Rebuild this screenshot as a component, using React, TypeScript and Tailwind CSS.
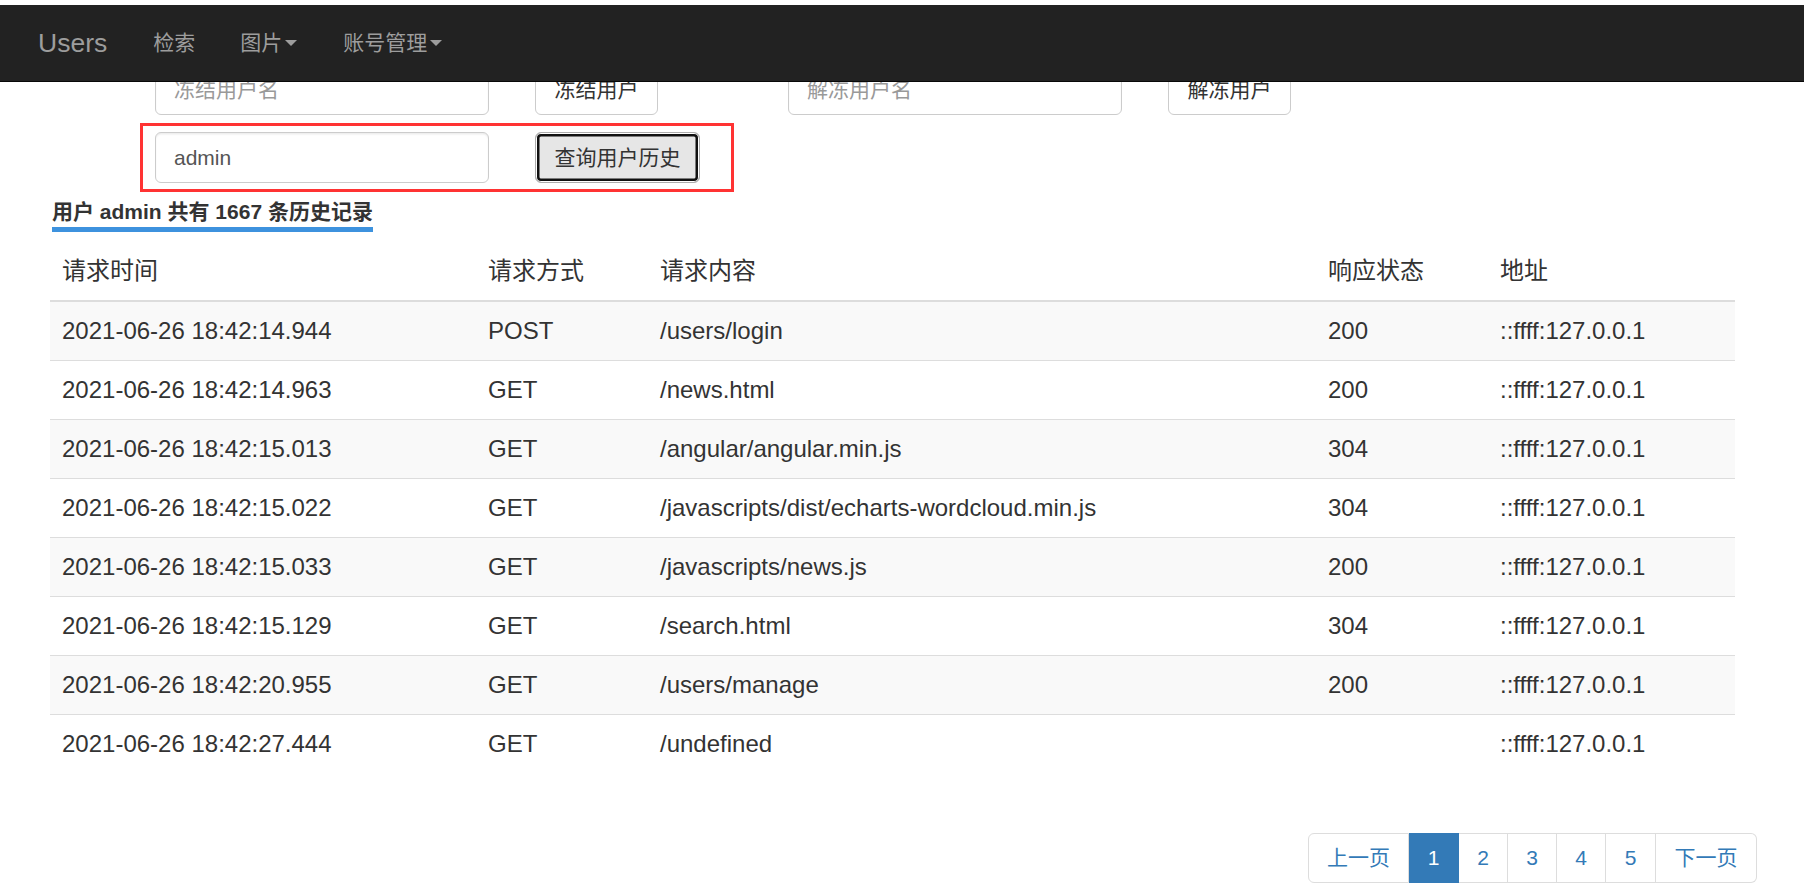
import React from 'react';

type Row = {
  time: string;
  method: string;
  url: string;
  status: string;
  addr: string;
};

const rows: Row[] = [
  { time: '2021-06-26 18:42:14.944', method: 'POST', url: '/users/login', status: '200', addr: '::ffff:127.0.0.1' },
  { time: '2021-06-26 18:42:14.963', method: 'GET', url: '/news.html', status: '200', addr: '::ffff:127.0.0.1' },
  { time: '2021-06-26 18:42:15.013', method: 'GET', url: '/angular/angular.min.js', status: '304', addr: '::ffff:127.0.0.1' },
  { time: '2021-06-26 18:42:15.022', method: 'GET', url: '/javascripts/dist/echarts-wordcloud.min.js', status: '304', addr: '::ffff:127.0.0.1' },
  { time: '2021-06-26 18:42:15.033', method: 'GET', url: '/javascripts/news.js', status: '200', addr: '::ffff:127.0.0.1' },
  { time: '2021-06-26 18:42:15.129', method: 'GET', url: '/search.html', status: '304', addr: '::ffff:127.0.0.1' },
  { time: '2021-06-26 18:42:20.955', method: 'GET', url: '/users/manage', status: '200', addr: '::ffff:127.0.0.1' },
  { time: '2021-06-26 18:42:27.444', method: 'GET', url: '/undefined', status: '', addr: '::ffff:127.0.0.1' },
];

function Caret() {
  return (
    <span className="ml-[3px] inline-block h-0 w-0 border-x-[6px] border-t-[6px] border-x-transparent border-t-[#9d9d9d] align-middle" />
  );
}

function Navbar() {
  return (
    <nav className="relative z-10 mt-[5px] flex h-[77px] items-center border-b border-[#080808] bg-[#222] text-[#9d9d9d]">
      <span className="ml-[38px] text-[26.5px] leading-[30px]">Users</span>
      <span className="ml-[46px] text-[21px] leading-[30px]">检索</span>
      <span className="ml-[45px] flex items-center text-[21px] leading-[30px]">
        图片
        <Caret />
      </span>
      <span className="ml-[46px] flex items-center text-[21px] leading-[30px]">
        账号管理
        <Caret />
      </span>
    </nav>
  );
}

const inputCls =
  'h-[51px] w-[334px] rounded-[6px] border border-[#ccc] bg-white px-[18px] text-[21px] text-[#555] shadow-[inset_0_1.5px_1.5px_rgba(0,0,0,0.075)] outline-none placeholder:text-[#999]';
const btnCls =
  'h-[51px] rounded-[6px] border border-[#ccc] bg-white px-[18px] text-[21px] leading-[30px] text-[#333]';

export default function App() {
  return (
    <div className="min-h-[891px] bg-white font-['Liberation_Sans','Noto_Sans_CJK_SC',sans-serif] text-[#333]">
      <Navbar />
      <div className="-mt-[18px]">
        {/* freeze / unfreeze row, partly under the navbar */}
        <div className="flex pl-[155px]">
          <input className={inputCls} placeholder="冻结用户名" />
          <button className={`${btnCls} ml-[46px] w-[123px]`}>冻结用户</button>
          <input className={`${inputCls} ml-[130px]`} placeholder="解冻用户名" />
          <button className={`${btnCls} ml-[46px] w-[123px]`}>解冻用户</button>
        </div>
        <div className="ml-[140px] mt-[8px] flex h-[69px] w-[594px] items-start border-[3px] border-[#f33] pl-[12px] pt-[6px]">
          <input className={inputCls} defaultValue="admin" />
          <button className="ml-[46px] h-[51px] w-[165px] rounded-[6px] border border-[#adadad] bg-[#e6e6e6] text-[21px] leading-[30px] text-[#333] shadow-[inset_0_0_0_1px_#fff,inset_0_0_0_3.5px_#111]">
            查询用户历史
          </button>
        </div>
        <div className="ml-[52px] mt-[5px]">
          <span className="inline-block border-b-[5px] border-[#3d92de] text-[21px] font-bold leading-[30px]">
            用户 admin 共有 1667 条历史记录
          </span>
        </div>
        <table className="ml-[50px] mt-[10px] w-[1685px] table-fixed border-collapse text-[24px] leading-[34px]">
          <colgroup>
            <col className="w-[426px]" />
            <col className="w-[172px]" />
            <col className="w-[668px]" />
            <col className="w-[172px]" />
            <col className="w-[247px]" />
          </colgroup>
          <thead>
            <tr className="border-b-2 border-[#ddd]">
              <th className="px-[12px] py-[12px] text-left font-normal">请求时间</th>
              <th className="px-[12px] py-[12px] text-left font-normal">请求方式</th>
              <th className="px-[12px] py-[12px] text-left font-normal">请求内容</th>
              <th className="px-[12px] py-[12px] text-left font-normal">响应状态</th>
              <th className="px-[12px] py-[12px] text-left font-normal">地址</th>
            </tr>
          </thead>
          <tbody>
            {rows.map((r, i) => (
              <tr
                key={r.time}
                className={`${i > 0 ? 'border-t border-[#ddd]' : ''} ${i % 2 === 0 ? 'bg-[#f9f9f9]' : 'bg-white'}`}
              >
                <td className="px-[12px] py-[12px]">{r.time}</td>
                <td className="px-[12px] py-[12px]">{r.method}</td>
                <td className="px-[12px] py-[12px]">{r.url}</td>
                <td className="px-[12px] py-[12px]">{r.status}</td>
                <td className="px-[12px] py-[12px]">{r.addr}</td>
              </tr>
            ))}
          </tbody>
        </table>
        <div className="mt-[60px] flex justify-end pr-[47px]">
          <ul className="flex text-[21px] text-[#337ab7]">
            <li className="flex h-[50px] w-[101px] items-center justify-center rounded-l-[6px] border border-[#ddd]">上一页</li>
            <li className="flex h-[50px] w-[50px] items-center justify-center border border-l-0 border-[#337ab7] bg-[#337ab7] text-white">1</li>
            <li className="flex h-[50px] w-[49px] items-center justify-center border border-l-0 border-[#ddd]">2</li>
            <li className="flex h-[50px] w-[49px] items-center justify-center border border-l-0 border-[#ddd]">3</li>
            <li className="flex h-[50px] w-[49px] items-center justify-center border border-l-0 border-[#ddd]">4</li>
            <li className="flex h-[50px] w-[50px] items-center justify-center border border-l-0 border-[#ddd]">5</li>
            <li className="flex h-[50px] w-[101px] items-center justify-center rounded-r-[6px] border border-l-0 border-[#ddd]">下一页</li>
          </ul>
        </div>
      </div>
    </div>
  );
}
